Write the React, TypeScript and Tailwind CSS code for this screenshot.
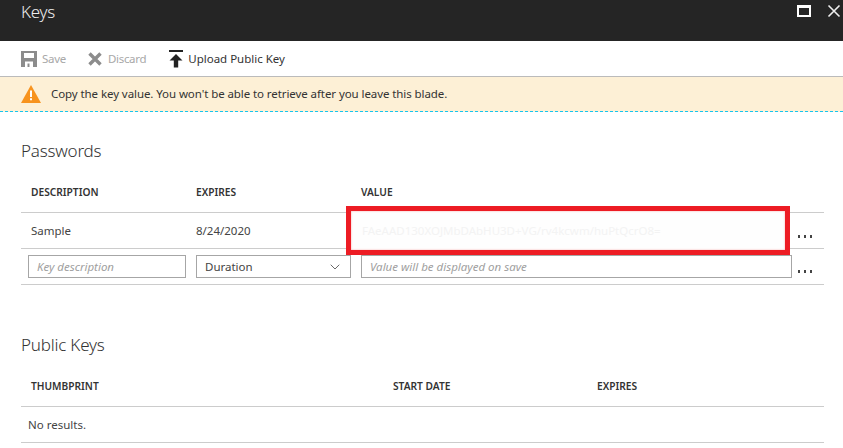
import { ChevronDown } from 'lucide-react'

function MoreDots({ className }: { className: string }) {
  return (
    <div className={`flex w-[32px] shrink-0 justify-end gap-[3.5px] pr-[12px] ${className}`}>
      <span className="h-[2.5px] w-[2.5px] bg-[#444]" />
      <span className="h-[2.5px] w-[2.5px] bg-[#444]" />
      <span className="h-[2.5px] w-[2.5px] bg-[#444]" />
    </div>
  )
}

function HeadCell({ label, className }: { label: string; className: string }) {
  return (
    <div className={`text-[10.2px] font-semibold uppercase text-[#333] ${className}`}>
      {label}
    </div>
  )
}

export default function App() {
  return (
    <div className="h-[448px] w-[843px] overflow-hidden bg-white font-['Noto_Sans',sans-serif] text-[#444]">
      <header className="flex h-[41px] justify-between bg-[#252525] pl-[21px] text-white">
        <h1 className="mt-[-1px] text-[17px] font-light leading-[26px] tracking-[-0.3px] text-[#eee]">Keys</h1>
        <div className="flex gap-[16px] pt-[5px]">
          <span className="h-[12px] w-[14px] border-[2px] border-t-[3px] border-white" />
          <svg width="14" height="14" viewBox="0 0 14 14" className="mt-[-1px] mr-[2px]">
            <path d="M1.5 1.5 12.5 12.5M12.5 1.5 1.5 12.5" stroke="#eee" strokeWidth="1.6" />
          </svg>
        </div>
      </header>

      <div className="flex h-[36px] items-center border-b border-[#bbb] pl-[21px] text-[11.5px]">
        <svg width="16" height="16" viewBox="0 0 16 16" className="mr-[5px]">
          <path d="M0 0h16v16H0z" fill="#8c8c8c" />
          <path d="M3 2h10v5H3z" fill="#fff" />
          <path d="M4 10.5h8V16H4z" fill="#fff" />
          <path d="M6.5 12.5h2V16h-2z" fill="#8c8c8c" />
        </svg>
        <span className="tracking-[-0.3px] text-[#a8a8a8]">Save</span>
        <svg width="14" height="14" viewBox="0 0 14 14" className="ml-[22px] mr-[6px]">
          <path d="M1.5 1.5 12.5 12.5M12.5 1.5 1.5 12.5" stroke="#8c8c8c" strokeWidth="3.4" />
        </svg>
        <span className="tracking-[-0.3px] text-[#a8a8a8]">Discard</span>
        <svg width="14" height="18" viewBox="0 0 14 18" className="ml-[23px] mr-[5px]">
          <path d="M0 0h14v2H0z" fill="#222" />
          <path d="M7 4 13.5 10.5H9.2V17.5H4.8V10.5H.5z" fill="#222" />
        </svg>
        <span className="text-[#333]">Upload Public Key</span>
      </div>

      <div className="flex h-[35px] items-center gap-[10px] border-b border-dashed border-[#18c5ee] bg-[#fdf0d6] pl-[21px] text-[11.5px] tracking-[-0.08px] text-[#333]">
        <svg width="20" height="18" viewBox="0 0 20 18">
          <path d="M10 0 20 18H0z" fill="#f7931e" />
          <path d="M9 5.5h2V12H9zM9 13.3h2v2H9z" fill="#fff" />
        </svg>
        <span>Copy the key value. You won't be able to retrieve after you leave this blade.</span>
      </div>

      <section className="relative pl-[21px] pr-[19px] pt-[27px]">
        <h2 className="text-[17px] font-light leading-[24px] tracking-[-0.2px] text-[#333]">Passwords</h2>

        <div className="mt-[20px] flex h-[30px] items-start border-b border-[#ccc] pt-[2px]">
          <HeadCell label="Description" className="ml-[10px] w-[165px]" />
          <HeadCell label="Expires" className="w-[165px]" />
          <HeadCell label="Value" className="" />
        </div>

        <div className="flex h-[36px] items-center border-b border-[#ccc] text-[11.5px]">
          <div className="ml-[10px] w-[165px]">Sample</div>
          <div className="w-[165px]">8/24/2020</div>
          <div className="flex-1" />
          <MoreDots className="pt-[12px]" />
        </div>

        <div className="flex h-[36px] items-start border-b border-[#ccc] pt-[6px] text-[11.5px]">
          <div className="ml-[7px] flex h-[23px] w-[158px] items-center border border-[#a6a6a6] px-[8px] italic text-[#a0a0a0]">
            Key description
          </div>
          <div className="ml-[10px] flex h-[23px] w-[155px] items-center justify-between border border-[#a6a6a6] pl-[8px] pr-[7px] text-[#444]">
            Duration
            <ChevronDown size={16} strokeWidth={1.2} />
          </div>
          <div className="ml-[10px] flex h-[23px] w-[431px] items-center border border-[#a6a6a6] px-[8px] italic text-[#a0a0a0]">
            Value will be displayed on save
          </div>
          <MoreDots className="pt-[15px]" />
        </div>

        <h2 className="mt-[48px] text-[17px] font-light leading-[24px] tracking-[-0.2px] text-[#333]">Public Keys</h2>

        <div className="mt-[20px] flex h-[30px] items-start border-b border-[#ccc] pt-[2px]">
          <HeadCell label="Thumbprint" className="ml-[10px] w-[362px]" />
          <HeadCell label="Start date" className="w-[204px]" />
          <HeadCell label="Expires" className="" />
        </div>

        <div className="flex h-[36px] items-center border-b border-[#ccc] pl-[7px] text-[11.5px]">
          No results.
        </div>

        <div className="absolute left-[346px] top-[94px] flex h-[49px] w-[444px] items-center border-[5px] border-[#ed1c24] bg-[#fefefe] pl-[11px] text-[11.5px] text-[#f3f3f3] shadow-[inset_0_0_2px_#f8a0a0]">
          FAeAAD130XOJMbDAbHU3D+VG/rv4kcwm/huPtQcrO8=
        </div>
      </section>
    </div>
  )
}
